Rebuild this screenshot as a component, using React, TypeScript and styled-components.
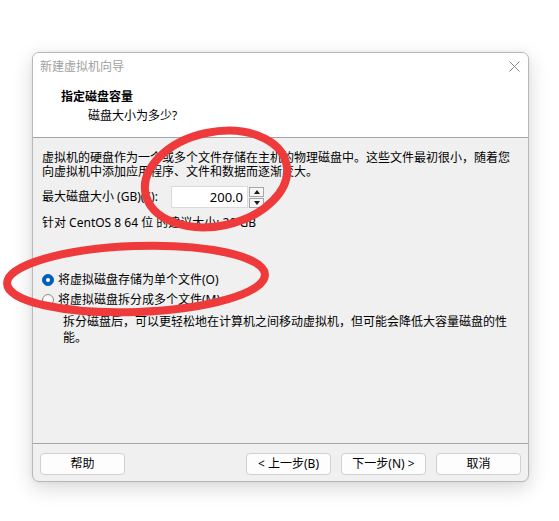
import React from 'react';
import styled, { createGlobalStyle } from 'styled-components';

const GlobalStyle = createGlobalStyle`
  html,
  body {
    margin: 0;
    background: #ffffff;
  }

  body {
    font-family: 'Noto Sans', 'Noto Sans CJK SC', sans-serif;
    font-size: 12px;
    color: #000000;
  }
`;

const Page = styled.div`
  position: relative;
  width: 559px;
  height: 521px;
  padding: 52px 0 0 32px;
  box-sizing: border-box;
  overflow: hidden;
`;

const Window = styled.div`
  width: 497px;
  height: 430px;
  box-sizing: border-box;
  border: 1px solid #b8b8b8;
  border-radius: 7px;
  overflow: hidden;
  display: flex;
  flex-direction: column;
  background: #f0f0f0;
  box-shadow: 0 6px 20px rgba(0, 0, 0, 0.16), 0 0 4px rgba(0, 0, 0, 0.06);
`;

const TitleBar = styled.div`
  height: 27px;
  flex: none;
  display: flex;
  align-items: center;
  justify-content: space-between;
  padding: 0 8px 0 7px;
  background: #ffffff;
  color: #a0a0a0;
  line-height: 16px;
`;

const CloseIcon = styled.svg`
  width: 11px;
  height: 11px;
  display: block;
`;

const Header = styled.div`
  flex: none;
  height: 57px;
  padding: 9px 0 0 28px;
  box-sizing: border-box;
  background: #ffffff;
  border-bottom: 1px solid #a5a5a5;
  box-sizing: content-box;
  height: 48px;
`;

const HeaderTitle = styled.div`
  font-weight: bold;
  line-height: 16px;
`;

const HeaderSub = styled.div`
  margin-top: 3px;
  padding-left: 27px;
  line-height: 16px;
`;

const Body = styled.div`
  flex: 1;
  padding: 13px 16px 0 9px;
`;

const Paragraph = styled.div`
  line-height: 14px;
`;

const SizeRow = styled.div`
  margin-top: 7px;
  display: flex;
  align-items: center;
  height: 22px;
`;

const Label = styled.div`
  width: 129px;
  line-height: 14px;
`;

const NumberInput = styled.div`
  width: 77px;
  height: 22px;
  box-sizing: border-box;
  background: #ffffff;
  border: 1px solid #dadada;
  display: flex;
  align-items: center;
  justify-content: flex-end;
  padding-right: 4px;
  font-size: 13px;
`;

const Spin = styled.div`
  margin-left: 1px;
  display: flex;
  flex-direction: column;
  gap: 1px;
`;

const SpinButton = styled.div<{ $down?: boolean }>`
  width: 15px;
  height: 10px;
  box-sizing: border-box;
  border: 1px solid #a6a6a6;
  background: #f6f6f6;
  display: flex;
  align-items: center;
  justify-content: center;

  &::after {
    content: '';
    border-left: 3px solid transparent;
    border-right: 3px solid transparent;
    ${(p) =>
      p.$down ? 'border-top: 4px solid #1a1a1a;' : 'border-bottom: 4px solid #1a1a1a;'}
  }
`;

const Hint = styled.div`
  margin-top: 8px;
  line-height: 14px;
`;

const RadioGroup = styled.div`
  margin-top: 42px;
  display: flex;
  flex-direction: column;
  gap: 4px;
`;

const RadioRow = styled.label`
  display: flex;
  align-items: center;
  gap: 4px;
  height: 16px;
  line-height: 16px;
`;

const RadioDot = styled.span<{ $checked?: boolean }>`
  width: 12px;
  height: 12px;
  box-sizing: border-box;
  border-radius: 50%;
  flex: none;
  display: flex;
  align-items: center;
  justify-content: center;
  background: ${(p) => (p.$checked ? '#005fb8' : '#f8f8f8')};
  border: 1px solid ${(p) => (p.$checked ? '#005fb8' : '#8a8a8a')};

  &::after {
    content: '';
    width: 4px;
    height: 4px;
    border-radius: 50%;
    background: ${(p) => (p.$checked ? '#ffffff' : 'transparent')};
  }
`;

const Description = styled.div`
  margin-top: 6px;
  padding-left: 21px;
  line-height: 16px;
`;

const Footer = styled.div`
  flex: none;
  border-top: 1px solid #a5a5a5;
  padding: 9px 7px 6px 7px;
  display: flex;
  gap: 10px;
`;

const Button = styled.button<{ $push?: boolean }>`
  width: 85px;
  height: 22px;
  box-sizing: border-box;
  margin: 0;
  margin-left: ${(p) => (p.$push ? 'auto' : '0')};
  padding: 0;
  border: 1px solid #d0d0d0;
  border-radius: 4px;
  background: #fdfdfd;
  font-family: inherit;
  font-size: 12px;
  line-height: 14px;
  color: #000000;
`;

const Annotations = styled.svg`
  position: absolute;
  left: 0;
  top: 0;
  width: 559px;
  height: 521px;
  pointer-events: none;
`;

export default function App() {
  return (
    <>
      <GlobalStyle />
      <Page>
        <Window>
          <TitleBar>
            <span>新建虚拟机向导</span>
            <CloseIcon viewBox="0 0 11 11">
              <path d="M0.5 0.5 L10.5 10.5 M10.5 0.5 L0.5 10.5" stroke="#8c8c8c" strokeWidth="1" />
            </CloseIcon>
          </TitleBar>
          <Header>
            <HeaderTitle>指定磁盘容量</HeaderTitle>
            <HeaderSub>磁盘大小为多少?</HeaderSub>
          </Header>
          <Body>
            <Paragraph>
              虚拟机的硬盘作为一个或多个文件存储在主机的物理磁盘中。这些文件最初很小，随着您
              <br />
              向虚拟机中添加应用程序、文件和数据而逐渐变大。
            </Paragraph>
            <SizeRow>
              <Label>最大磁盘大小 (GB)(S):</Label>
              <NumberInput>200.0</NumberInput>
              <Spin>
                <SpinButton />
                <SpinButton $down />
              </Spin>
            </SizeRow>
            <Hint>针对 CentOS 8 64 位 的建议大小: 20 GB</Hint>
            <RadioGroup>
              <RadioRow>
                <RadioDot $checked />
                将虚拟磁盘存储为单个文件(O)
              </RadioRow>
              <RadioRow>
                <RadioDot />
                将虚拟磁盘拆分成多个文件(M)
              </RadioRow>
            </RadioGroup>
            <Description>
              拆分磁盘后，可以更轻松地在计算机之间移动虚拟机，但可能会降低大容量磁盘的性
              <br />
              能。
            </Description>
          </Body>
          <Footer>
            <Button>帮助</Button>
            <Button $push>&lt; 上一步(B)</Button>
            <Button>下一步(N) &gt;</Button>
            <Button>取消</Button>
          </Footer>
        </Window>
        <Annotations viewBox="0 0 559 521">
          <ellipse
            cx="216"
            cy="179"
            rx="72"
            ry="47"
            transform="rotate(-12 216 179)"
            fill="none"
            stroke="#ef3a3c"
            strokeWidth="8"
          />
          <ellipse
            cx="136"
            cy="279"
            rx="129"
            ry="33"
            transform="rotate(-2 136 279)"
            fill="none"
            stroke="#ef3a3c"
            strokeWidth="8"
          />
        </Annotations>
      </Page>
    </>
  );
}
